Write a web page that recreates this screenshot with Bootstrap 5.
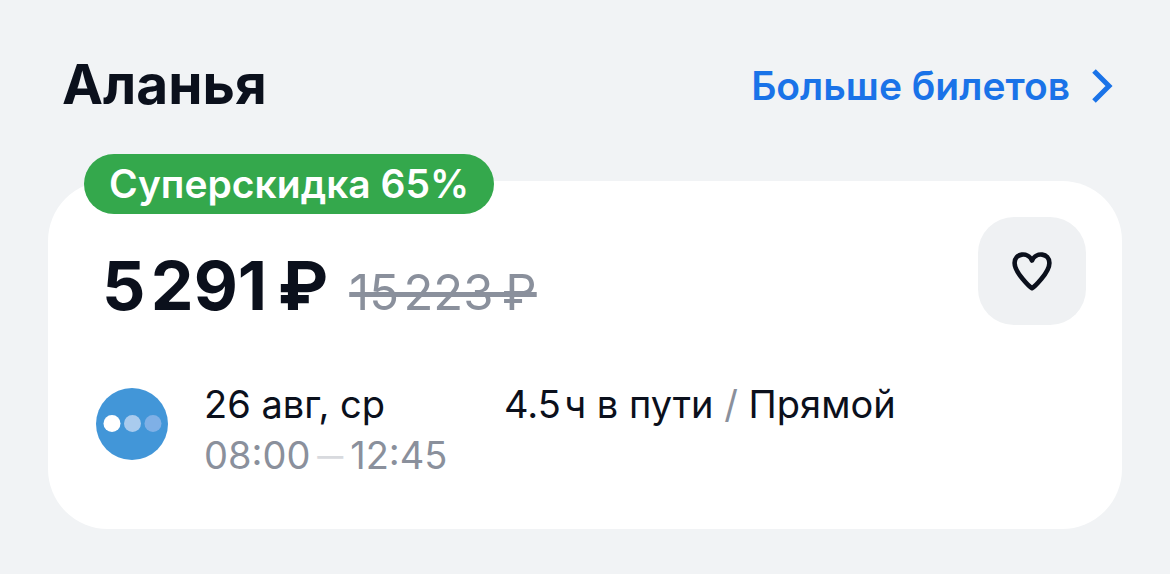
<!DOCTYPE html>
<html lang="ru">
<head>
<meta charset="utf-8">
<meta name="viewport" content="width=device-width, initial-scale=1">
<title>Аланья</title>
<link href="https://cdn.jsdelivr.net/npm/bootstrap@5.3.0/dist/css/bootstrap.min.css" rel="stylesheet">
<style>
body{background:#f1f3f5;color:#0b101c;font-family:Inter,sans-serif;line-height:1}
.page{padding:48px 48px 0}
.head-row{padding:0 8px 0 14px;height:72px}
.city{font-size:55px;line-height:70px;font-weight:700}
.more{color:#1a73e8;font-size:39px;line-height:48px;font-weight:600;gap:20px;padding-top:4px}
.ticket{margin-top:61px;border-radius:60px;padding:36px 36px 48px 48px}
.sale{top:-27px;left:36px;height:60px;padding:0 25px;background:#34a84c;font-size:39px;line-height:60px;font-weight:600}
.price{font-size:68px;line-height:84px;font-weight:700}
.old{font-size:49px;line-height:60px;color:#8a909c;text-decoration-thickness:5px}
.fav,.fav:hover{width:108px;height:108px;border-radius:36px;background:#eff1f3}
.prices{padding:26px 0 0 6px;gap:21px}
.flight{margin-top:52px;font-size:38px;line-height:51px}
.carrier{margin-top:9px}
.when{width:300px;margin-left:36px}
.soft{color:#8a909c}
.dash{color:#d8dade;font-size:26px;line-height:1;font-weight:600;vertical-align:4px}
</style>
</head>
<body>
<main class="page">
<header class="head-row d-flex justify-content-between align-items-center">
<h1 class="city m-0">Аланья</h1>
<a href="#" class="more d-flex align-items-center text-decoration-none">Больше билетов
<svg width="24" height="36" viewBox="0 0 24 36" fill="none" stroke="currentColor" stroke-width="5" aria-hidden="true"><path d="M4 3 19 18 4 33"/></svg></a>
</header>
<article class="ticket position-relative bg-white">
<span class="sale position-absolute rounded-pill text-white text-nowrap">Суперскидка 65%</span>
<div class="d-flex justify-content-between align-items-start">
<div class="prices d-flex align-items-baseline text-nowrap"><strong class="price">5&hairsp;291&thinsp;₽</strong><s class="old">15&hairsp;223&thinsp;₽</s></div>
<button type="button" class="fav btn border-0 p-0 d-flex align-items-center justify-content-center" aria-label="В избранное">
<svg width="44" height="44" viewBox="0 0 44 44" fill="none" stroke="#0b101c" stroke-width="4.6" stroke-linejoin="round" stroke-linecap="round" aria-hidden="true"><path d="M22 39.300C20.500 38.500 4.600 24 4.600 14C4.600 4 18 2.500 22 11.500C26 2.500 39.400 4 39.400 14C39.400 24 23.500 38.500 22 39.300Z"/></svg></button>
</div>
<div class="flight d-flex align-items-start">
<svg class="carrier flex-shrink-0" width="72" height="72" viewBox="0 0 72 72" aria-hidden="true"><circle cx="36" cy="36" r="36" fill="#4296d8"/><circle cx="16" cy="35.500" r="8.500" fill="#fff"/><circle cx="36.500" cy="35.500" r="8.500" fill="#a9cbee"/><circle cx="57" cy="35.500" r="8.500" fill="#7fb0e6"/></svg>
<div class="when flex-shrink-0 text-nowrap"><div>26 авг, ср</div><div class="soft">08:00&thinsp;<span class="dash">—</span>&thinsp;12:45</div></div>
<div>4.5&hairsp;ч в пути <span class="soft">/</span> Прямой</div>
</div>
</article>
</main>
<script src="https://cdn.jsdelivr.net/npm/bootstrap@5.3.0/dist/js/bootstrap.bundle.min.js"></script>
</body>
</html>
